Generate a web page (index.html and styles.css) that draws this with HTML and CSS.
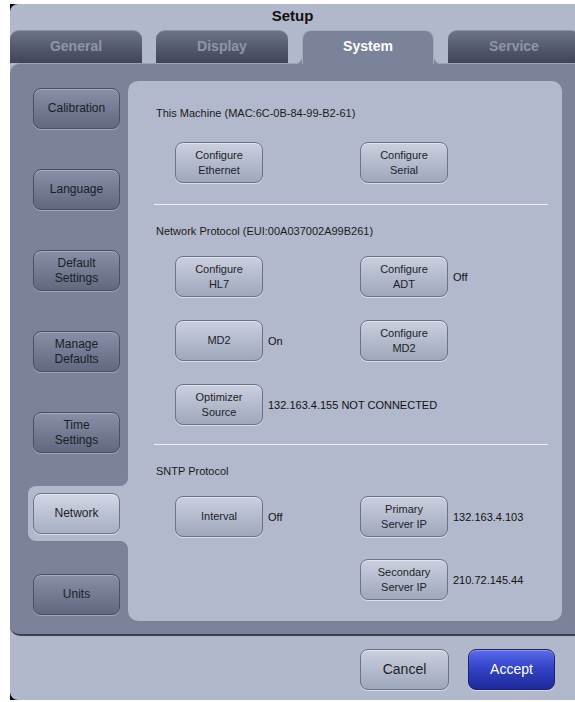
FILE: index.html
```html
<!DOCTYPE html>
<html lang="en">
<head>
  <meta charset="UTF-8" />
  <title>Setup</title>
  <link rel="stylesheet" href="styles.css">
</head>
<body>

<div class="screen">
  <div class="frame">
    <div class="title">Setup</div>

    <div class="tabs">
      <div class="tab">General</div>
      <div class="tab">Display</div>
      <div class="tab active">System</div>
      <div class="tab">Service</div>
    </div>

    <div class="panel">
      <div class="sidebar">
        <div class="nav-item"><button class="btn btn-dark">Calibration</button></div>
        <div class="nav-item"><button class="btn btn-dark">Language</button></div>
        <div class="nav-item"><button class="btn btn-dark">Default<br>Settings</button></div>
        <div class="nav-item"><button class="btn btn-dark">Manage<br>Defaults</button></div>
        <div class="nav-item"><button class="btn btn-dark">Time<br>Settings</button></div>
        <div class="nav-item active"><button class="btn btn-nav">Network</button></div>
        <div class="nav-item"><button class="btn btn-dark">Units</button></div>
      </div>

      <div class="content">
        <div class="section first">
          <div class="section-title">This Machine (MAC:6C-0B-84-99-B2-61)</div>
          <div class="rows">
            <div class="cell"><button class="btn">Configure<br>Ethernet</button></div>
            <div class="cell"><button class="btn">Configure<br>Serial</button></div>
          </div>
        </div>

        <div class="section">
          <div class="section-title">Network Protocol (EUI:00A037002A99B261)</div>
          <div class="rows">
            <div class="cell"><button class="btn">Configure<br>HL7</button></div>
            <div class="cell"><button class="btn">Configure<br>ADT</button><span class="value">Off</span></div>
            <div class="cell"><button class="btn">MD2</button><span class="value">On</span></div>
            <div class="cell"><button class="btn">Configure<br>MD2</button></div>
            <div class="cell wide"><button class="btn">Optimizer<br>Source</button><span class="value">132.163.4.155 NOT CONNECTED</span></div>
          </div>
        </div>

        <div class="section last">
          <div class="section-title">SNTP Protocol</div>
          <div class="rows">
            <div class="cell"><button class="btn">Interval</button><span class="value">Off</span></div>
            <div class="cell"><button class="btn">Primary<br>Server IP</button><span class="value">132.163.4.103</span></div>
            <div class="cell"></div>
            <div class="cell"><button class="btn">Secondary<br>Server IP</button><span class="value">210.72.145.44</span></div>
          </div>
        </div>
      </div>
    </div>

    <div class="actions">
      <button class="btn btn-cancel">Cancel</button>
      <button class="btn btn-primary">Accept</button>
    </div>
  </div>
</div>

</body>
</html>
```

FILE: styles.css
```css
body { margin: 0; background: #fff; overflow: hidden; font-family: 'Liberation Sans', Arial, sans-serif; }
.screen { margin: 4px 0 0 10px; width: 565px; height: 696px; background: #000; }
.frame { height: 100%; display: flex; flex-direction: column; background: #b2b8cb; border-radius: 8px 0 0 8px; overflow: hidden; }

.title { height: 26px; line-height: 24px; text-align: center; font-size: 15px; font-weight: bold; color: #111; }

.tabs { display: flex; gap: 14px; height: 33px; align-items: flex-end; }
.tab { flex: 0 0 132px; height: 33px; box-sizing: border-box; border-radius: 9px 9px 0 0; background: linear-gradient(#6c7388, #3f4456); border-top: 1px solid #8a90a3; color: #8e95a8; font-size: 14px; font-weight: bold; text-align: center; line-height: 31px; }
.tab.active { position: relative; z-index: 1; height: 34px; margin-bottom: -1px; background: #7a839a; border: 1px solid #a5acbf; border-bottom: none; color: #fff; }
.tab.active::before, .tab.active::after { content: ''; position: absolute; bottom: 0; width: 8px; height: 8px; }
.tab.active::before { left: -9px; background: radial-gradient(circle at 0 0, transparent 7.5px, #a5acbf 8px, #7a839a 9px); }
.tab.active::after { right: -9px; background: radial-gradient(circle at 100% 0, transparent 7.5px, #a5acbf 8px, #7a839a 9px); }

.panel { display: flex; align-items: flex-start; height: 573px; box-sizing: border-box; background: #7a839a; border-top: 1px solid #9ba2b6; border-bottom: 2px solid #3c4150; border-radius: 10px 0 0 10px; }

.sidebar { width: 118px; flex: none; padding-top: 17px; display: flex; flex-direction: column; gap: 26px; }
.nav-item { position: relative; width: 100px; box-sizing: border-box; margin-left: 18px; padding: 7px 8px 7px 5px; border-radius: 8px 0 0 8px; }
.nav-item.active { background: #b3b9cc; }
.nav-item.active::before, .nav-item.active::after { content: ''; position: absolute; right: 0; width: 8px; height: 8px; }
.nav-item.active::before { top: -8px; background: radial-gradient(circle at 0 0, transparent 7.5px, #b3b9cc 8.5px); }
.nav-item.active::after { bottom: -8px; background: radial-gradient(circle at 0 100%, transparent 7.5px, #b3b9cc 8.5px); }

.btn { width: 88px; height: 41px; box-sizing: border-box; padding: 0; border: 1px solid #6b7388; border-radius: 8px; background: linear-gradient(#cbd0df, #b4bbcd 50%, #9fa7bc); box-shadow: inset 0 1px 0 rgba(255,255,255,.45), 0 1px 0 rgba(255,255,255,.55); font-family: 'Liberation Sans', Arial, sans-serif; font-size: 11px; line-height: 15px; color: #1c1f28; flex: none; }
.btn-dark { width: 87px; font-size: 12px; border-color: #4a5062; background: linear-gradient(#8790a6, #737c93 50%, #61697f); box-shadow: inset 0 1px 0 rgba(255,255,255,.25), 0 1px 0 rgba(255,255,255,.3); color: #1a1d28; }
.btn-nav { width: 87px; font-size: 12px; background: linear-gradient(#d2d7e5, #bcc2d4 50%, #a8afc3); }

.content { width: 434px; height: 540px; margin-top: 17px; box-sizing: border-box; background: #b3b9cc; border-radius: 10px; }
.section { padding: 19px 0 19px; margin: 0 14px 0 26px; border-bottom: 1px solid #eef0f6; }
.section.first { padding-top: 25px; padding-bottom: 21px; }
.section.first .section-title { margin-bottom: 22px; }
.section.last { border-bottom: none; }
.section-title { margin-left: 2px; font-size: 11px; line-height: 14px; color: #1a1a1a; margin-bottom: 18px; }
.rows { display: grid; grid-template-columns: 185px 1fr; row-gap: 23px; padding-left: 21px; }
.section.last .rows { row-gap: 22px; }
.cell { display: flex; align-items: center; gap: 5px; min-height: 41px; }
.cell.wide { grid-column: 1 / 3; }
.value { font-size: 11px; color: #111; }

.actions { display: flex; justify-content: flex-end; gap: 19px; padding: 13px 20px 0 0; }
.btn-cancel { width: 89px; font-size: 14px; }
.btn-primary { width: 87px; font-size: 14px; color: #fff; border-color: #1a226e; background: linear-gradient(#5a6cec, #3344c8 45%, #1d2a98); box-shadow: inset 0 1px 0 rgba(255,255,255,.3), 0 1px 0 rgba(255,255,255,.5); }
```
